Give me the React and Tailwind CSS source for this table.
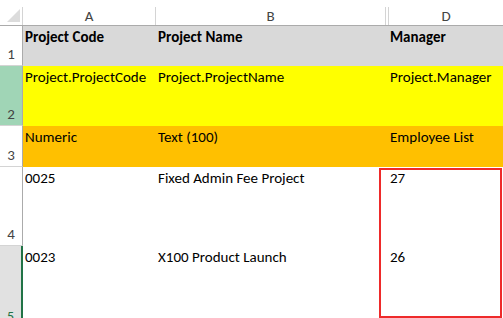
import React from 'react';

const font = { fontFamily: 'Carlito, Lato, "Open Sans", sans-serif' };

const rows = [
  { n: '1', h: 'h-[40px]', fill: 'bg-[#d9d9d9]', bold: true, cells: ['Project Code', 'Project Name', 'Manager'] },
  { n: '2', h: 'h-[60px]', fill: 'bg-[#ffff00]', head: 'bg-[#a0d5b6]', cells: ['Project.ProjectCode', 'Project.ProjectName', 'Project.Manager'] },
  { n: '3', h: 'h-[41px]', fill: 'bg-[#ffc000]', cells: ['Numeric', 'Text (100)', 'Employee List'] },
  { n: '4', h: 'h-[79px]', fill: 'bg-white', cells: ['0025', 'Fixed Admin Fee Project', '27'] },
  { n: '5', h: 'h-[80px]', fill: 'bg-white', selected: true, cells: ['0023', 'X100 Product Launch', '26'] },
];

function RowHead({ row }) {
  if (row.selected) {
    return (
      <div className={`w-[23px] shrink-0 ${row.h} bg-[#e1e1e1] border-r-2 border-[#217346] flex items-end justify-center pb-[2px] text-[14px] leading-none text-[#217346]`}>
        {row.n}
      </div>
    );
  }
  return (
    <div className={`w-[23px] shrink-0 ${row.h} ${row.head || 'bg-white'} border-r border-b border-[#ababab] border-b-[#d4d4d4] flex items-end justify-center pb-[3px] text-[15px] leading-none text-[#444]`}>
      {row.n}
    </div>
  );
}

export default function App() {
  return (
    <div className="relative w-[503px] h-[318px] overflow-hidden bg-white text-black" style={font}>
      {/* column headers */}
      <div className="flex h-[26px] border-b border-[#ababab] text-[15px] text-[#444]">
        <div className="w-[23px] shrink-0 flex items-end">
          <div className="relative w-[23px] h-[18px] border-r border-[#d4d4d4]">
            <svg className="absolute left-[7px] top-[2px]" width="14" height="14" viewBox="0 0 14 14">
              <polygon points="0,13 13,13 13,0" fill="#dcdcdc" />
            </svg>
          </div>
        </div>
        <div className="w-[133px] shrink-0 flex items-end">
          <div className="w-full h-[18px] border-r border-[#d4d4d4] flex items-center justify-center">A</div>
        </div>
        <div className="w-[230px] shrink-0 flex items-end">
          <div className="w-full h-[18px] border-r border-[#d4d4d4] flex items-center justify-center">B</div>
        </div>
        <div className="w-[3px] shrink-0 flex items-end">
          <div className="w-full h-[18px] border-r border-[#d4d4d4]" />
        </div>
        <div className="flex-1 flex items-end">
          <div className="w-full h-[18px] flex items-center justify-center">D</div>
        </div>
      </div>

      {rows.map((row) => (
        <div key={row.n} className={`flex ${row.h}`}>
          <RowHead row={row} />
          <div className={`flex-1 flex ${row.fill} text-[15px] leading-[18px] pt-[2px] ${row.bold ? 'font-bold' : ''}`}>
            <div className="w-[133px] shrink-0 pl-[2px] whitespace-nowrap overflow-hidden">{row.cells[0]}</div>
            <div className="w-[233px] shrink-0 pl-[2px] whitespace-nowrap overflow-hidden">{row.cells[1]}</div>
            <div className="flex-1 pl-[1px] whitespace-nowrap overflow-hidden">{row.cells[2]}</div>
          </div>
        </div>
      ))}

      {/* red highlight box */}
      <div className="absolute left-[379px] top-[168px] w-[123px] h-[150px] border-2 border-[#ee2a2a]" />
    </div>
  );
}
